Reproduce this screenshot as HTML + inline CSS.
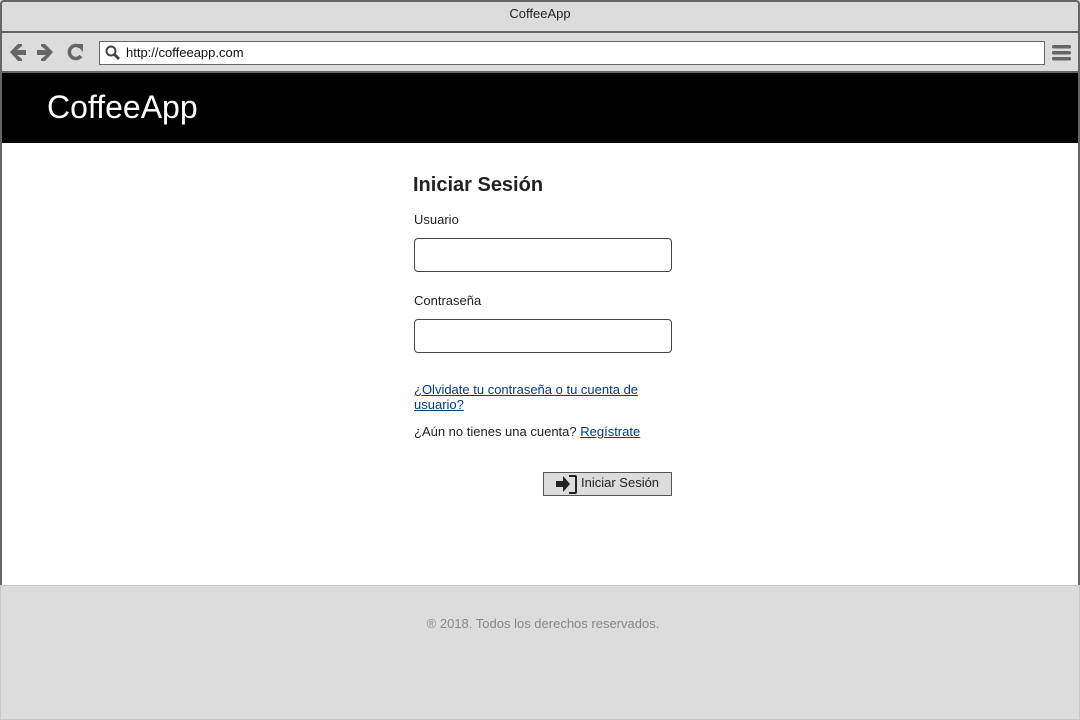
<!DOCTYPE html>
<html><head><style>
*{margin:0;padding:0;box-sizing:border-box}
body{width:1080px;height:720px;position:relative;overflow:hidden;font-family:"Liberation Sans",Arial,sans-serif;background:#fff}
.frame{position:absolute;left:0;top:0;width:1080px;height:720px;border:2px solid #666;border-radius:4px 4px 0 0;pointer-events:none}
.title{position:absolute;left:0;top:0;width:1080px;height:33px;background:#dcdcdc;border-bottom:2px solid #666;text-align:center;font-size:13px;line-height:28px;color:#222}
.tool{position:absolute;left:0;top:33px;width:1080px;height:40px;background:#dcdcdc;border-bottom:2px solid #666}
.url{position:absolute;left:99px;top:8px;width:946px;height:24px;background:#fff;border:1px solid #666;font-size:13px;line-height:22px;padding-left:26px;color:#111}
.hdr{position:absolute;left:2px;top:73px;width:1076px;height:70px;background:#000;color:#fff;font-size:32px;padding:16px 0 0 45px}
.foot{position:absolute;left:0;top:585px;width:1080px;height:135px;background:#dcdcdc;border:1px solid #c8c8c8;text-align:center;color:#888;font-size:13px;padding-top:30px;padding-left:6px;z-index:5}
.form{position:absolute;left:413px;top:174px;width:260px;color:#222}
h1{font-size:20px;font-weight:bold}
label{display:block;font-size:13px;position:absolute;left:1px}
.inp{position:absolute;left:1px;width:258px;height:34px;border:1px solid #444;border-radius:4px;background:#fff}
a{color:#003d7a;text-decoration:underline}
.t{position:absolute;left:1px;font-size:13px;line-height:15px}
.btn{position:absolute;left:130px;top:298px;width:129px;height:24px;background:#dcdcdc;border:1px solid #555;font-size:13px;line-height:20px;padding-left:37px}
</style></head><body>
<div class="title">CoffeeApp</div>
<div class="tool">
<svg style="position:absolute;left:9px;top:9px" width="80" height="22" viewBox="0 0 80 22" fill="#666">
<path d="M1 10 L9 2 L13 2 L13 4 L8 8 L17 8 L17 13 L8 13 L13 17 L13 19 L9 19 Z"/>
<path d="M44 10 L36 2 L32 2 L32 4 L37 8 L28 8 L28 13 L37 13 L32 17 L32 19 L36 19 Z"/>
<path d="M71 5 A6.5 6.5 0 1 0 72 14" stroke="#666" stroke-width="3.5" fill="none"/><path d="M67 2 L74 2 L74 10 Z"/>
</svg>
<div class="url"><svg style="position:absolute;left:5px;top:3px" width="16" height="16" viewBox="0 0 16 16"><circle cx="6" cy="6" r="4.5" stroke="#444" stroke-width="2" fill="none"/><path d="M9 9 L14 14" stroke="#444" stroke-width="3"/></svg>http://coffeeapp.com</div>
<svg style="position:absolute;left:1052px;top:11px" width="20" height="18"><rect x="0" y="1" width="19" height="3.5" rx="1.5" fill="#666"/><rect x="0" y="7" width="19" height="3.5" rx="1.5" fill="#666"/><rect x="0" y="13" width="19" height="3.5" rx="1.5" fill="#666"/></svg>
</div>
<div class="hdr">CoffeeApp</div>
<div class="form">
<h1>Iniciar Sesión</h1>
<label style="top:38px">Usuario</label>
<div class="inp" style="top:64px"></div>
<label style="top:119px">Contraseña</label>
<div class="inp" style="top:145px"></div>
<div class="t" style="top:208px"><a>¿Olvidate tu contraseña o tu cuenta de usuario?</a></div>
<div class="t" style="top:250px">¿Aún no tienes una cuenta? <a>Regístrate</a></div>
<div class="btn"><svg style="position:absolute;left:11px;top:1px" width="24" height="21" viewBox="0 0 24 21"><path d="M1 7 L8 7 L8 2 L15 10 L8 18 L8 13 L1 13 Z" fill="#222"/><path d="M14 2 L20 2 Q21 2 21 3 L21 18 Q21 19 20 19 L14 19" stroke="#222" stroke-width="2" fill="none"/></svg>Iniciar Sesión</div>
</div>
<div class="frame"></div>
<div class="foot">® 2018. Todos los derechos reservados.</div>
</body></html>
